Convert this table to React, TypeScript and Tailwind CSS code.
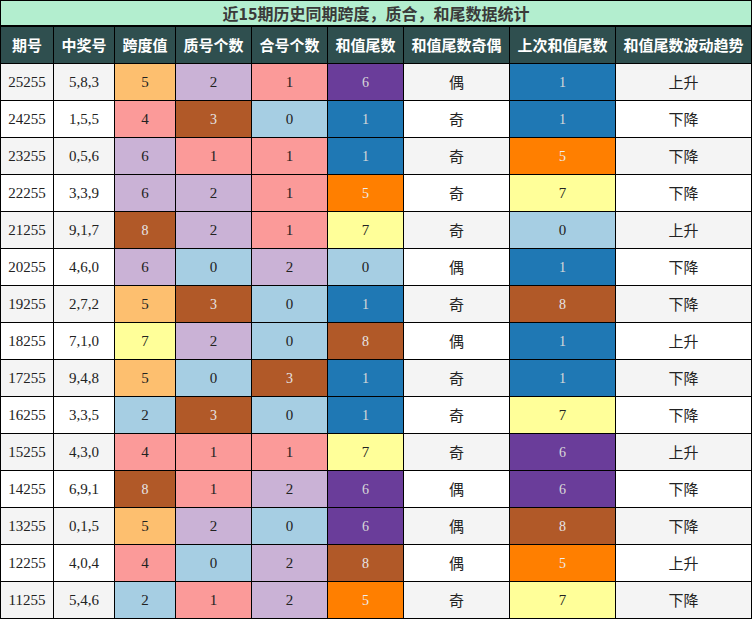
import React from "react";

// colour keys used by the coloured cells
const C: Record<string, { bg: string; fg: string }> = {
  L: { bg: "bg-[#a6cee3]", fg: "text-[#222]" },
  B: { bg: "bg-[#1f78b4]", fg: "text-[#d9d9d9]" },
  K: { bg: "bg-[#fb9a99]", fg: "text-[#222]" },
  P: { bg: "bg-[#cab2d6]", fg: "text-[#222]" },
  O: { bg: "bg-[#fdbf6f]", fg: "text-[#222]" },
  Y: { bg: "bg-[#ffff99]", fg: "text-[#222]" },
  R: { bg: "bg-[#b15928]", fg: "text-[#e6e6e6]" },
  N: { bg: "bg-[#ff7f00]", fg: "text-[#eeeeee]" },
  V: { bg: "bg-[#6a3d9a]", fg: "text-[#d9d9d9]" },
};

const spanColor: Record<number, string> = { 2: "L", 4: "K", 5: "O", 6: "P", 7: "Y", 8: "R" };
const countColor: Record<number, string> = { 0: "L", 1: "K", 2: "P", 3: "R" };
const tailColor: Record<number, string> = { 0: "L", 1: "B", 5: "N", 6: "V", 7: "Y", 8: "R" };

type Row = [string, string, number, number, number, number, string, number, string];

const rows: Row[] = [
  ["25255", "5,8,3", 5, 2, 1, 6, "偶", 1, "上升"],
  ["24255", "1,5,5", 4, 3, 0, 1, "奇", 1, "下降"],
  ["23255", "0,5,6", 6, 1, 1, 1, "奇", 5, "下降"],
  ["22255", "3,3,9", 6, 2, 1, 5, "奇", 7, "下降"],
  ["21255", "9,1,7", 8, 2, 1, 7, "奇", 0, "上升"],
  ["20255", "4,6,0", 6, 0, 2, 0, "偶", 1, "下降"],
  ["19255", "2,7,2", 5, 3, 0, 1, "奇", 8, "下降"],
  ["18255", "7,1,0", 7, 2, 0, 8, "偶", 1, "上升"],
  ["17255", "9,4,8", 5, 0, 3, 1, "奇", 1, "下降"],
  ["16255", "3,3,5", 2, 3, 0, 1, "奇", 7, "下降"],
  ["15255", "4,3,0", 4, 1, 1, 7, "奇", 6, "上升"],
  ["14255", "6,9,1", 8, 1, 2, 6, "偶", 6, "下降"],
  ["13255", "0,1,5", 5, 2, 0, 6, "偶", 8, "下降"],
  ["12255", "4,0,4", 4, 0, 2, 8, "偶", 5, "上升"],
  ["11255", "5,4,6", 2, 1, 2, 5, "奇", 7, "下降"],
];

const headers = ["期号", "中奖号", "跨度值", "质号个数", "合号个数", "和值尾数", "和值尾数奇偶", "上次和值尾数", "和值尾数波动趋势"];

const serif = "font-['Liberation_Serif','DejaVu_Serif',serif]";
const cjk = "font-['Noto_Sans_CJK_SC','Noto_Sans',sans-serif]";

function Colored({ k, v }: { k: string; v: number }) {
  const c = C[k];
  const dark = k === "B" || k === "R" || k === "N" || k === "V";
  return (
    <div className={`flex items-center justify-center ${c.bg} ${c.fg} ${serif} ${dark ? "text-[14px]" : "text-[15px]"}`}>
      {v}
    </div>
  );
}

export default function App() {
  return (
    <div className="w-[752px] bg-white">
      <div className={`h-[26px] border border-black bg-[#b3eecf] flex items-center justify-center text-[16px] font-bold text-[#3a3a3a] ${cjk}`}>
        近15期历史同期跨度，质合，和尾数据统计
      </div>
      <div className="grid grid-cols-[52px_60px_60px_75px_75px_75px_105px_105px_135px] auto-rows-[36px] gap-px p-px bg-black">
        {headers.map((h) => (
          <div key={h} className={`bg-[#2f4f4f] text-white font-bold text-[15px] flex items-center justify-center ${cjk}`}>
            {h}
          </div>
        ))}
        {rows.map((r, i) => {
          const base = i % 2 === 0 ? "bg-[#f4f4f4]" : "bg-white";
          return (
            <React.Fragment key={r[0]}>
              <div className={`${base} flex items-center justify-center text-[15px] text-[#222] ${serif}`}>{r[0]}</div>
              <div className={`${base} flex items-center justify-center text-[15px] text-[#222] ${serif}`}>{r[1]}</div>
              <Colored k={spanColor[r[2]]} v={r[2]} />
              <Colored k={countColor[r[3]]} v={r[3]} />
              <Colored k={countColor[r[4]]} v={r[4]} />
              <Colored k={tailColor[r[5]]} v={r[5]} />
              <div className={`${base} flex items-center justify-center text-[15px] text-[#222] ${cjk}`}>{r[6]}</div>
              <Colored k={tailColor[r[7]]} v={r[7]} />
              <div className={`${base} flex items-center justify-center text-[15px] text-[#222] ${cjk}`}>{r[8]}</div>
            </React.Fragment>
          );
        })}
      </div>
    </div>
  );
}
